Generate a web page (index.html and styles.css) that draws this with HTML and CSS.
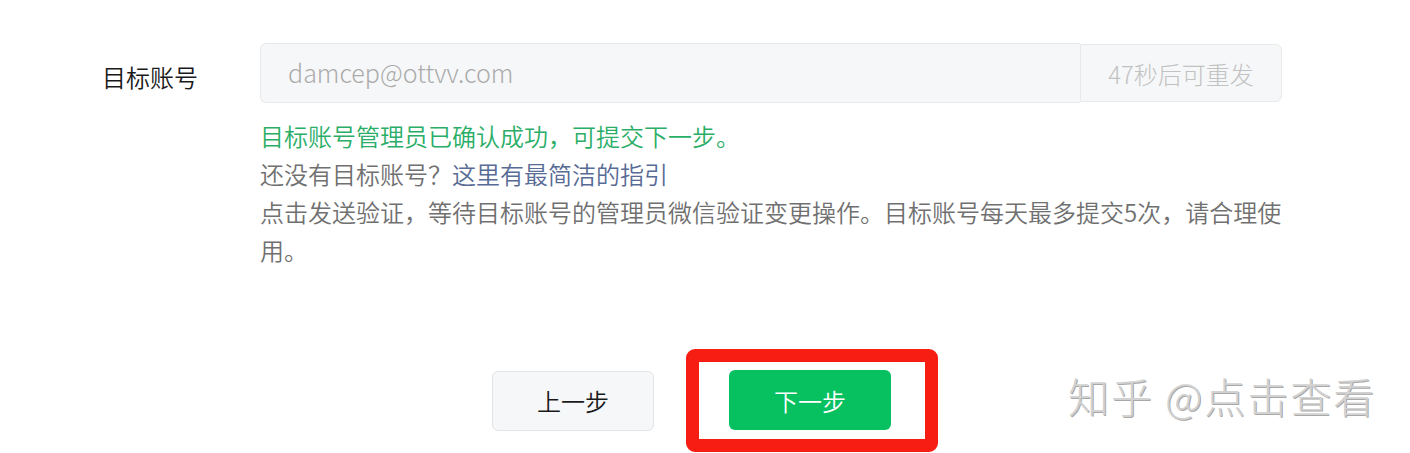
FILE: index.html
```html
<!DOCTYPE html>
<html lang="zh-CN">
<head>
    <meta charset="UTF-8">
    <meta name="viewport" content="width=device-width, initial-scale=1.0">
    <title>变更账号</title>
    <link rel="stylesheet" href="styles.css">
</head>
<body>
    <div class="page">
        <div class="form-row">
            <label class="form-label" for="target-account">目标账号</label>
            <div class="form-field">
                <div class="input-group">
                    <input type="text" id="target-account" class="account-input" value="damcep@ottvv.com" disabled>
                    <button class="resend-btn" disabled>47秒后可重发</button>
                </div>
                <div class="tips">
                    <p class="tip-success">目标账号管理员已确认成功，可提交下一步。</p>
                    <p>还没有目标账号？<a href="#" class="tip-link">这里有最简洁的指引</a></p>
                    <p>点击发送验证，等待目标账号的管理员微信验证变更操作。目标账号每天最多提交5次，请合理使用。</p>
                </div>
            </div>
        </div>

        <div class="actions">
            <button class="btn btn-default">上一步</button>
            <div class="highlight">
                <button class="btn btn-primary">下一步</button>
            </div>
        </div>

        <div class="watermark">知乎 @点击查看</div>
    </div>
</body>
</html>
```

FILE: styles.css
```css
body {
    margin: 0;
    background-color: #fff;
    font-family: "Noto Sans CJK SC", "Noto Sans", sans-serif;
    font-weight: 350;
    color: #1a1a1a;
}
.page {
    position: relative;
    width: 1410px;
    height: 453px;
    overflow: hidden;
}
.form-row {
    display: flex;
    padding: 43px 0 0 102px;
}
.form-label {
    width: 158px;
    font-size: 24px;
    line-height: 60px;
    padding-top: 4px;
    color: #1a1a1a;
}
.form-field {
    width: 1022px;
}
.input-group {
    display: flex;
    height: 60px;
}
.account-input {
    box-sizing: border-box;
    width: 820px;
    height: 60px;
    padding: 0 27px 3px;
    border: 1px solid #e8e9ea;
    border-right: none;
    border-radius: 6px 0 0 6px;
    background-color: #f6f7f8;
    font-family: inherit;
    font-weight: 300;
    font-size: 25px;
    color: #ababab;
    outline: none;
}
.resend-btn {
    box-sizing: border-box;
    width: 202px;
    height: 58px;
    margin-top: 1px;
    border: 1px solid #e8e9ea;
    border-radius: 0 6px 6px 0;
    background-color: #f6f7f8;
    font-family: inherit;
    font-weight: 300;
    font-size: 24px;
    color: #c2c2c2;
}
.tips {
    margin-top: 14px;
    font-size: 24px;
    line-height: 38px;
    color: #707070;
}
.tips p {
    margin: 0;
}
.tip-success {
    color: #2aae67;
}
.tip-link {
    color: #576b95;
    text-decoration: none;
}
.actions {
    display: flex;
    align-items: center;
    margin: 80px 0 0 492px;
}
.btn {
    box-sizing: border-box;
    width: 162px;
    height: 60px;
    border-radius: 6px;
    font-family: inherit;
    font-weight: 350;
    font-size: 24px;
    cursor: pointer;
}
.btn-default {
    border: 1px solid #e3e4e5;
    background-color: #f6f7f8;
    color: #1a1a1a;
}
.btn-primary {
    border: none;
    background-color: #07c160;
    color: #fff;
}
.highlight {
    display: flex;
    margin-left: 32px;
    padding: 8px 34px 9px 30px;
    border: 13px solid #f81d12;
    border-radius: 9px;
}
.watermark {
    position: absolute;
    left: 1068px;
    top: 370px;
    font-size: 41px;
    line-height: 50px;
    font-weight: 300;
    color: #d2d2d2;
    text-shadow: 1px 1px 0 #a8a8a8;
    letter-spacing: 2px;
}
```
